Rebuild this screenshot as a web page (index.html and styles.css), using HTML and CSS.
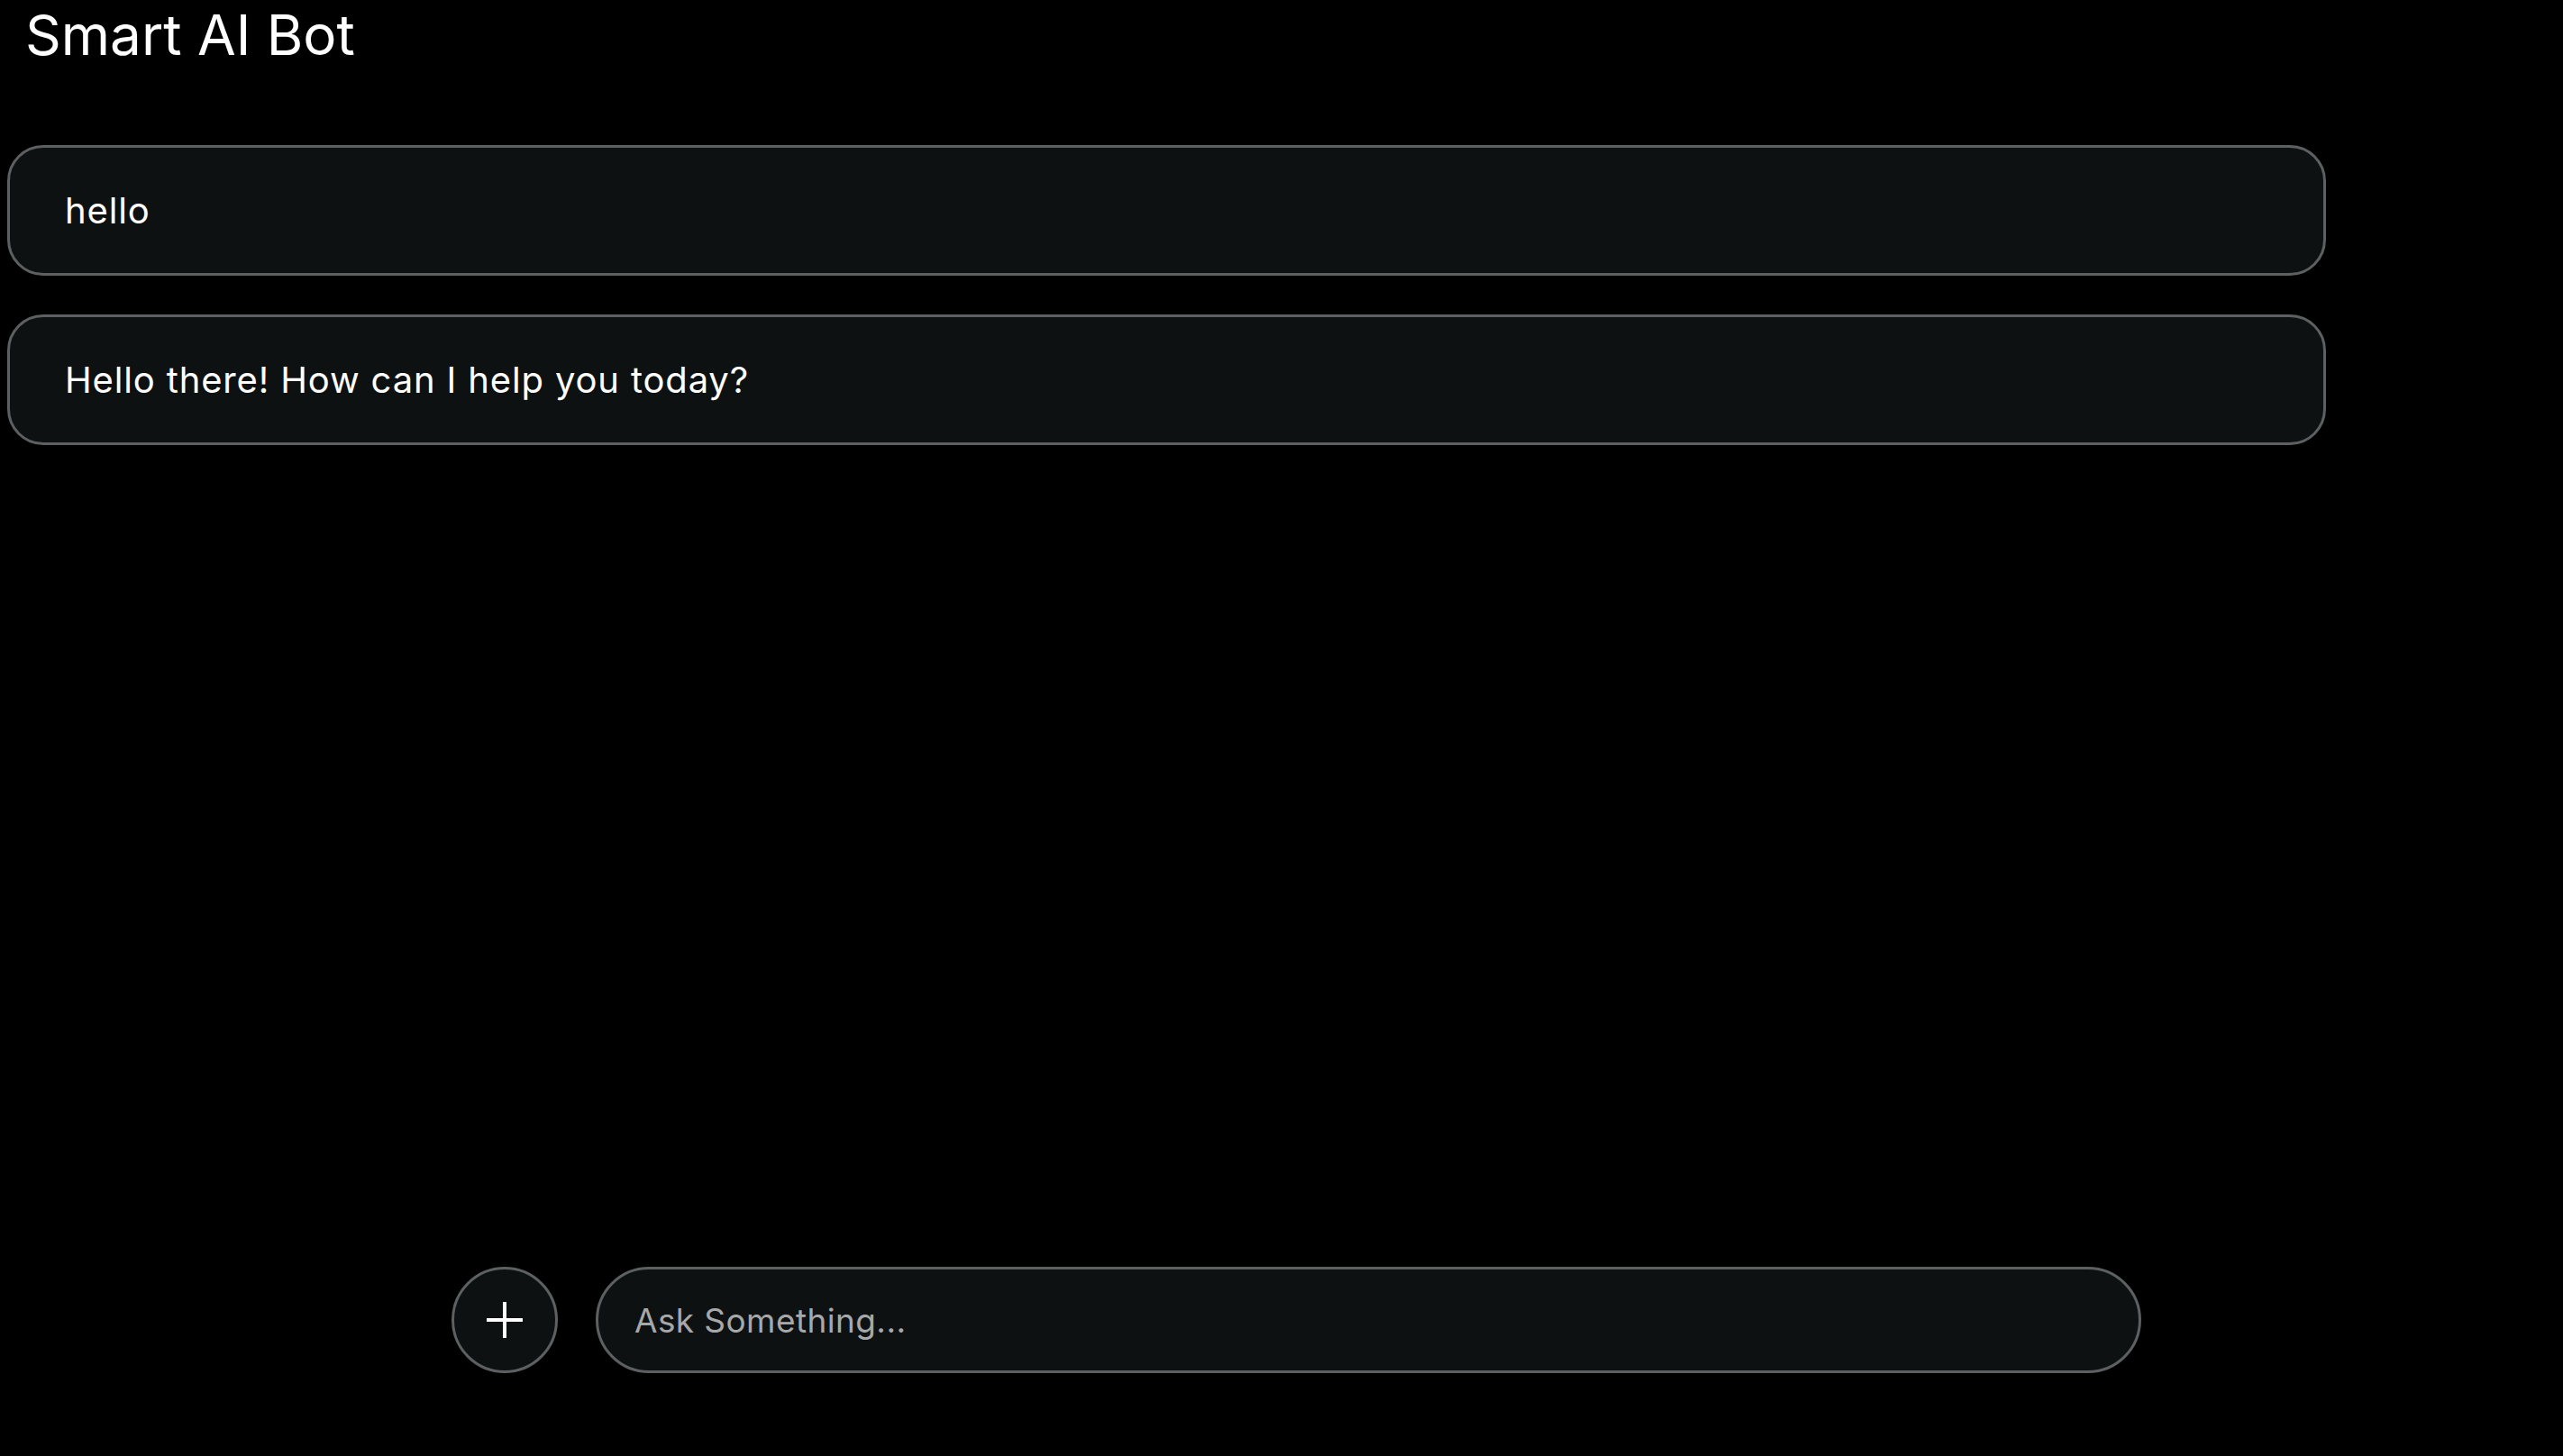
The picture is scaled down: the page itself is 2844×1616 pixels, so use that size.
FILE: index.html
```html
<!DOCTYPE html>
<html lang="en">
<head>
<meta charset="utf-8">
<title>Smart AI Bot</title>
<link rel="stylesheet" href="styles.css">
</head>
<body>
<div class="app">
  <header class="header">
    <h1 class="title">Smart AI Bot</h1>
  </header>
  <main class="chat">
    <div class="bubble">hello</div>
    <div class="bubble">Hello there! How can I help you today?</div>
  </main>
  <footer class="composer">
    <button class="new-btn" type="button" aria-label="New chat">
      <svg width="40" height="40" viewBox="0 0 40 40" aria-hidden="true">
        <path d="M20 1v38M1 20h38" stroke="#ffffff" stroke-width="4" stroke-linecap="round" fill="none"/>
      </svg>
    </button>
    <div class="input">Ask Something...</div>
  </footer>
</div>
</body>
</html>
```
FILE: styles.css
```css
html, body {
  margin: 0;
  padding: 0;
  background: #000000;
  height: 100%;
}
body {
  font-family: Inter, "Noto Sans", sans-serif;
  color: #ffffff;
}
.app {
  height: 100vh;
  display: flex;
  flex-direction: column;
}
.header {
  padding: 0 0 0 28px;
  height: 161px;
  box-sizing: border-box;
}
.title {
  margin: 0;
  font-weight: 400;
  font-size: 62px;
  line-height: 78px;
}
.chat {
  flex: 1;
  display: flex;
  flex-direction: column;
  gap: 43px;
  padding: 0 263px 0 8px;
}
.bubble {
  height: 145px;
  box-sizing: border-box;
  border: 3.5px solid #5c6061;
  border-radius: 40px;
  background: #0e1112;
  display: flex;
  align-items: center;
  padding-left: 61px;
  font-size: 40px;
  letter-spacing: 0.85px;
}
.composer {
  display: flex;
  align-items: center;
  gap: 42px;
  padding: 0 468px 92px 501px;
}
.new-btn {
  width: 118px;
  height: 118px;
  flex: none;
  border-radius: 50%;
  border: 3.5px solid #5c6061;
  background: #0e1112;
  display: flex;
  align-items: center;
  justify-content: center;
  padding: 0;
}
.input {
  flex: 1;
  height: 118px;
  box-sizing: border-box;
  border: 3.5px solid #5c6061;
  border-radius: 59px;
  background: #0e1112;
  display: flex;
  align-items: center;
  padding-left: 40px;
  font-size: 37px;
  letter-spacing: 0.4px;
  color: #a6a8a9;
}
```
